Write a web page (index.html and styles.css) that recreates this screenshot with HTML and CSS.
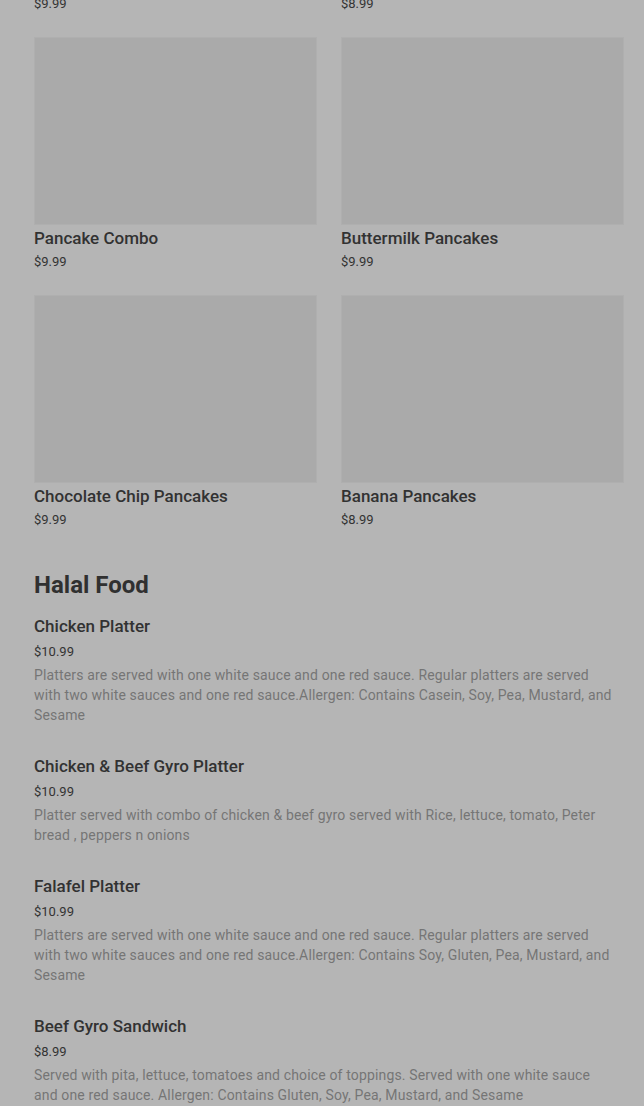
FILE: index.html
```html
<!DOCTYPE html>
<html lang="en">
<head>
<meta charset="utf-8">
<title>Menu</title>
<link rel="stylesheet" href="styles.css">
</head>
<body>
<main class="page">
  <div class="grid grid-top">
    <div class="card"><div class="price">$9.99</div></div>
    <div class="card"><div class="price">$8.99</div></div>
  </div>
  <div class="grid">
    <div class="card">
      <div class="thumb"></div>
      <div class="name">Pancake Combo</div>
      <div class="price">$9.99</div>
    </div>
    <div class="card">
      <div class="thumb"></div>
      <div class="name">Buttermilk Pancakes</div>
      <div class="price">$9.99</div>
    </div>
    <div class="card">
      <div class="thumb"></div>
      <div class="name">Chocolate Chip Pancakes</div>
      <div class="price">$9.99</div>
    </div>
    <div class="card">
      <div class="thumb"></div>
      <div class="name">Banana Pancakes</div>
      <div class="price">$8.99</div>
    </div>
  </div>

  <section class="section">
    <h2 class="section-title">Halal Food</h2>
    <div class="list">
      <div class="item">
        <div class="name">Chicken Platter</div>
        <div class="item-price">$10.99</div>
        <p class="desc">Platters are served with one white sauce and one red sauce. Regular platters are served with two white sauces and one red sauce.Allergen: Contains Casein, Soy, Pea, Mustard, and Sesame</p>
      </div>
      <div class="item">
        <div class="name">Chicken &amp; Beef Gyro Platter</div>
        <div class="item-price">$10.99</div>
        <p class="desc">Platter served with combo of chicken &amp; beef gyro served with Rice, lettuce, tomato, Peter bread , peppers n onions</p>
      </div>
      <div class="item">
        <div class="name">Falafel Platter</div>
        <div class="item-price">$10.99</div>
        <p class="desc">Platters are served with one white sauce and one red sauce. Regular platters are served with two white sauces and one red sauce.Allergen: Contains Soy, Gluten, Pea, Mustard, and Sesame</p>
      </div>
      <div class="item">
        <div class="name">Beef Gyro Sandwich</div>
        <div class="item-price">$8.99</div>
        <p class="desc">Served with pita, lettuce, tomatoes and choice of toppings. Served with one white sauce and one red sauce. Allergen: Contains Gluten, Soy, Pea, Mustard, and Sesame</p>
      </div>
    </div>
  </section>
</main>
</body>
</html>
```
FILE: styles.css
```css
html, body {
  margin: 0;
  padding: 0;
  background: #b5b5b5;
}
body {
  font-family: Roboto, "Liberation Sans", sans-serif;
  color: #333333;
  overflow: hidden;
}
.page {
  padding: 0 20px 0 34px;
  margin-top: -8px;
}
.grid {
  display: grid;
  grid-template-columns: 1fr 1fr;
  column-gap: 24px;
  row-gap: 23px;
}
.grid-top {
  margin-bottom: 23px;
}
.card {
  display: flex;
  flex-direction: column;
}
.thumb {
  height: 188px;
  background: #aaaaaa;
  box-shadow: inset 0 0 0 1px #afafaf;
}
.name {
  font-size: 17px;
  line-height: 24px;
  font-weight: 500;
  color: #323232;
  margin-top: 1px;
}
.price {
  font-size: 13px;
  line-height: 20px;
  color: #333333;
  margin-top: 2px;
}
.section {
  margin-top: 39px;
}
.section-title {
  margin: 0;
  font-size: 24px;
  line-height: 32px;
  font-weight: 700;
  color: #303030;
}
.list {
  display: flex;
  flex-direction: column;
  gap: 29px;
  margin-top: 13px;
}
.item .name {
  margin-top: 0;
}
.item-price {
  font-size: 13px;
  line-height: 20px;
  color: #333333;
  margin-top: 4px;
}
.desc {
  margin: 3px 0 0;
  padding-right: 7px;
  font-size: 14px;
  line-height: 20px;
  letter-spacing: 0.15px;
  color: #757575;
}
```
